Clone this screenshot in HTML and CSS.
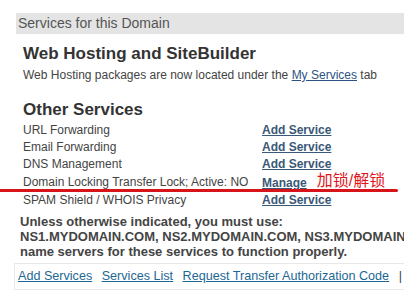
FILE: index.html
```html
<!DOCTYPE html>
<html lang="en">
<head>
    <meta charset="UTF-8">
    <title>Services for this Domain</title>
    <link rel="stylesheet" href="styles.css">
</head>
<body>
    <div class="panel">
        <div class="panel-title">Services for this Domain</div>
        <div class="panel-body">
            <h2>Web Hosting and SiteBuilder</h2>
            <p class="note">Web Hosting packages are now located under the <a href="#" class="link">My Services</a> tab</p>

            <h2 class="other">Other Services</h2>
            <table class="services">
                <tr><td>URL Forwarding</td><td><a href="#" class="action">Add Service</a></td></tr>
                <tr><td>Email Forwarding</td><td><a href="#" class="action">Add Service</a></td></tr>
                <tr><td>DNS Management</td><td><a href="#" class="action">Add Service</a></td></tr>
                <tr class="marked">
                    <td>Domain Locking Transfer Lock; Active: NO</td>
                    <td><a href="#" class="action">Manage</a><span class="tag">加锁/解锁</span></td>
                </tr>
                <tr><td>SPAM Shield / WHOIS Privacy</td><td><a href="#" class="action">Add Service</a></td></tr>
            </table>
            <div class="underline-mark"></div>
        </div>

        <div class="ns-note">
            Unless otherwise indicated, you must use:<br>
            NS1.MYDOMAIN.COM, NS2.MYDOMAIN.COM, NS3.MYDOMAIN.COM<br>
            name servers for these services to function properly.
        </div>

        <div class="footer-links">
            <a href="#">Add Services</a>
            <a href="#">Services List</a>
            <a href="#">Request Transfer Authorization Code</a>
            <span class="sep">|</span>
        </div>
    </div>
</body>
</html>
```

FILE: styles.css
```css
html, body {
    margin: 0;
    background-color: white;
    overflow: hidden;
}
body {
    font-family: Arial, "Liberation Sans", "Noto Sans CJK SC", sans-serif;
    color: #444;
    width: 404px;
    height: 297px;
}
.panel {
    padding-top: 13px;
}
.panel-title {
    margin-left: 16px;
    height: 21px;
    line-height: 21px;
    padding-left: 2px;
    background-color: #e4e4e4;
    color: #555;
    font-size: 14px;
}
.panel-body {
    padding-left: 23px;
    position: relative;
}
h2 {
    margin: 0;
    font-size: 17px;
    color: #333;
    line-height: 20px;
}
.panel-body h2:first-child {
    margin-top: 10px;
}
.note {
    margin: 3px 0 0 0;
    font-size: 12px;
    line-height: 16px;
    color: #444;
    white-space: nowrap;
}
.link {
    color: #2d5282;
}
.other {
    margin-top: 17px;
}
.services {
    border-collapse: collapse;
    margin-top: 2px;
    font-size: 12px;
}
.services td {
    padding: 0;
    height: 17px;
    line-height: 17px;
    white-space: nowrap;
}
.services td:first-child {
    width: 239px;
}
.action {
    color: #3a5877;
    font-weight: bold;
}
.tag {
    color: #e0161b;
    font-size: 16px;
    margin-left: 10px;
    position: relative;
    top: -1px;
}
.underline-mark {
    position: absolute;
    left: -3px;
    right: 6px;
    top: 145px;
    height: 3px;
    border-radius: 2px;
    background-color: #d8141b;
}
.ns-note {
    margin: 5px 0 0 20px;
    font-size: 13px;
    font-weight: bold;
    line-height: 15px;
    color: #444;
    white-space: nowrap;
}
.footer-links {
    margin: 4px 0 0 14px;
    padding: 4px 0 5px 3px;
    border: 1px solid #e8e8e8;
    border-right: none;
    font-size: 12.6px;
    line-height: 16px;
    white-space: nowrap;
}
.footer-links a {
    color: #1d6794;
    margin-right: 6px;
}
.sep {
    color: #444;
}
```
